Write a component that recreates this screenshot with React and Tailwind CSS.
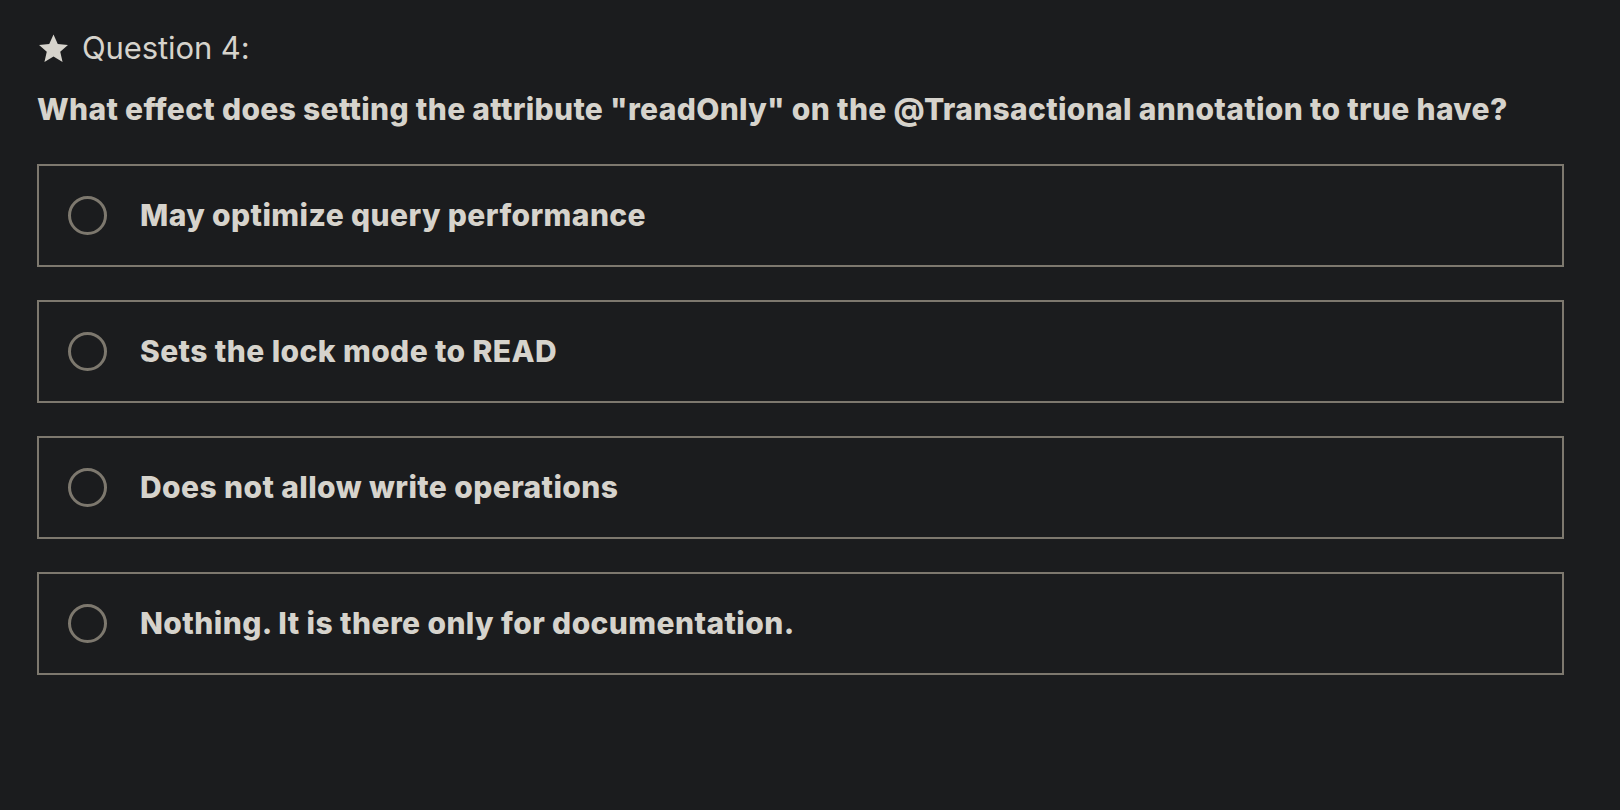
const options = [
  "May optimize query performance",
  "Sets the lock mode to READ",
  "Does not allow write operations",
  "Nothing. It is there only for documentation.",
];

function Star() {
  return (
    <svg width="33" height="33" viewBox="0 0 24 24" fill="#d6d3cc">
      <path d="M12 1.8l3.1 6.9 7.4.7-5.6 5 1.7 7.4L12 17.9l-6.6 3.9 1.7-7.4-5.6-5 7.4-.7z" />
    </svg>
  );
}

export default function App() {
  return (
    <div className="min-h-[810px] w-full bg-[#1b1c1e] pl-[37px] pt-[30px] text-[#d6d3cc]" style={{ fontFamily: "Inter, 'Noto Sans', sans-serif" }}>
      <div className="flex items-center gap-[12px]">
        <Star />
        <span className="text-[31px] leading-[36px] tracking-[-0.1px]">Question 4:</span>
      </div>
      <h2 className="mt-[25px] text-[30px] font-extrabold leading-[36px] tracking-[0.32px]">
        What effect does setting the attribute "readOnly" on the @Transactional annotation to true have?
      </h2>
      <div className="mt-[37px] flex w-[1527px] flex-col gap-[33px]">
        {options.map((o) => (
          <label key={o} className="flex h-[103px] items-center border-2 border-[#7d786e] pl-[29px]">
            <span className="h-[39px] w-[39px] rounded-full border-[3px] border-[#7d786e]" />
            <span className="ml-[33px] text-[30px] font-extrabold tracking-[0.4px]">{o}</span>
          </label>
        ))}
      </div>
    </div>
  );
}
